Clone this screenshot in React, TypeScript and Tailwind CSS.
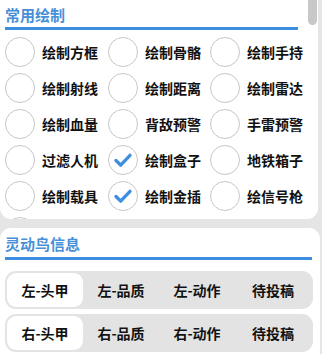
import React from "react";

const font = { fontFamily: '"Noto Sans CJK SC", "Noto Sans", sans-serif' };

const items: { label: string; checked: boolean }[] = [
  { label: "绘制方框", checked: false },
  { label: "绘制骨骼", checked: false },
  { label: "绘制手持", checked: false },
  { label: "绘制射线", checked: false },
  { label: "绘制距离", checked: false },
  { label: "绘制雷达", checked: false },
  { label: "绘制血量", checked: false },
  { label: "背敌预警", checked: false },
  { label: "手雷预警", checked: false },
  { label: "过滤人机", checked: false },
  { label: "绘制盒子", checked: true },
  { label: "地铁箱子", checked: false },
  { label: "绘制载具", checked: false },
  { label: "绘制金插", checked: true },
  { label: "绘信号枪", checked: false },
  { label: "", checked: false },
];

function Radio({ checked }: { checked: boolean }) {
  return (
    <div className="w-[30px] h-[30px] rounded-full border-[1.5px] border-[#c6c6c6] bg-white flex items-center justify-center shrink-0">
      {checked && (
        <svg width="30" height="30" viewBox="0 0 30 30" fill="none">
          <path d="M7.5 15.5 L12.5 20.5 L22.5 10" stroke="#3f8fe0" strokeWidth="3.6" strokeLinecap="round" strokeLinejoin="round" />
        </svg>
      )}
    </div>
  );
}

function Segments({ labels, active }: { labels: string[]; active: number }) {
  return (
    <div className="ml-[5px] w-[308px] h-[38px] bg-[#e3e3e3] rounded-[11px] p-[2px] grid grid-cols-4">
      {labels.map((l, i) => (
        <div
          key={i}
          className={
            i === active
              ? "bg-white rounded-[9px] flex items-center justify-center text-[14px] font-bold text-[#111]"
              : "flex items-center justify-center text-[14px] font-bold text-[#111]"
          }
        >
          {l}
        </div>
      ))}
    </div>
  );
}

export default function App() {
  return (
    <div className="w-[322px] h-[354px] bg-[#e5e5e5] overflow-hidden" style={font}>
      <div className="relative w-[318px] h-[219px] bg-white rounded-b-[11px] overflow-hidden">
        <div className="absolute right-[1px] top-0 w-[9px] h-[25px] rounded-b-full bg-[#c8c8c8]" />
        <div className="pl-[5px] pt-[5px] h-[27px] text-[15px] leading-[20px] font-bold text-[#4790d8]">常用绘制</div>
        <div className="ml-[5px] w-[293px] h-[3px] bg-[#3d8ee0]" />
        <div className="mt-[4px] ml-[5px] grid grid-cols-[103px_102px_103px]">
          {items.map((it, i) => (
            <div key={i} className="h-[36px] flex items-center gap-[7px]">
              <Radio checked={it.checked} />
              <span className="text-[14px] font-bold text-[#111] whitespace-nowrap">{it.label}</span>
            </div>
          ))}
        </div>
      </div>
      <div className="mt-[9px] w-[320px] h-[200px] bg-white rounded-t-[11px]">
        <div className="pl-[5px] pt-[6px] h-[26px] text-[15px] leading-[20px] font-bold text-[#4790d8]">灵动鸟信息</div>
        <div className="ml-[5px] mt-[3px] w-[307px] h-[3px] bg-[#3d8ee0]" />
        <div className="mt-[11px] flex flex-col gap-[5px]">
          <Segments labels={["左-头甲", "左-品质", "左-动作", "待投稿"]} active={0} />
          <Segments labels={["右-头甲", "右-品质", "右-动作", "待投稿"]} active={0} />
        </div>
      </div>
    </div>
  );
}
